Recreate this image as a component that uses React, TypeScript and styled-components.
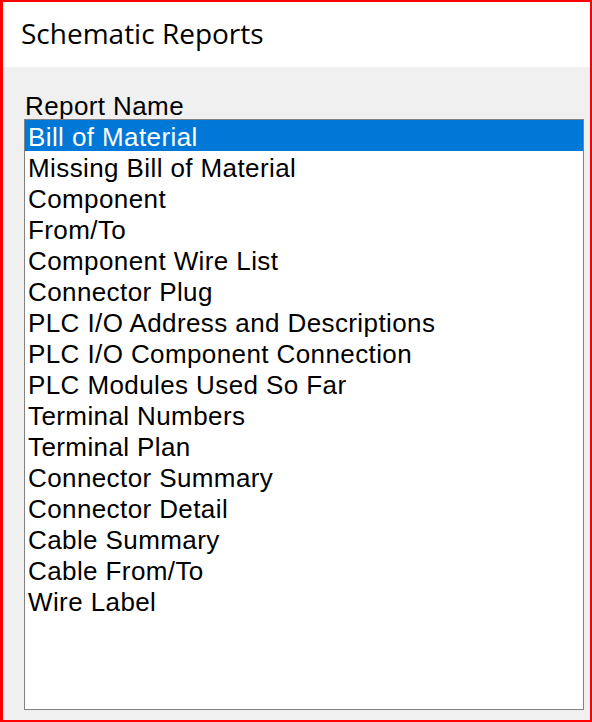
import React, { useState } from "react";
import styled, { createGlobalStyle } from "styled-components";

const GlobalStyle = createGlobalStyle`
  html, body {
    margin: 0;
    padding: 0;
    width: 100%;
    height: 100%;
    background: #ffffff;
  }
  #root {
    height: 100%;
  }
`;

const Frame = styled.div`
  box-sizing: border-box;
  width: 592px;
  height: 722px;
  border: 2px solid #ff0000;
  border-left-width: 3px;
  display: flex;
  flex-direction: column;
  background: #f0f0f0;
`;

const Header = styled.div`
  height: 65px;
  background: #ffffff;
  display: flex;
  align-items: center;
  padding-left: 18px;
  padding-bottom: 4px;
  box-sizing: border-box;
  font-family: "Open Sans", "Noto Sans", sans-serif;
  font-size: 28px;
  color: #000000;
`;

const Body = styled.div`
  flex: 1;
  display: flex;
  flex-direction: column;
  padding: 23px 6px 10px 21px;
  font-family: "Liberation Sans", Arial, sans-serif;
  letter-spacing: 0.4px;
`;

const Label = styled.div`
  font-size: 26px;
  height: 29px;
  line-height: 27px;
  padding-top: 3px;
  box-sizing: border-box;
  padding-left: 1px;
  color: #000000;
`;

const ListBox = styled.ul`
  flex: 1;
  list-style: none;
  margin: 0;
  padding: 0;
  background: #ffffff;
  border: 1px solid #828282;
`;

const Item = styled.li<{ $selected: boolean }>`
  box-sizing: border-box;
  height: 31px;
  padding-top: 4px;
  line-height: 27px;
  padding-left: 3px;
  font-size: 26px;
  white-space: nowrap;
  cursor: default;
  color: ${(p) => (p.$selected ? "#ffffff" : "#000000")};
  background: ${(p) => (p.$selected ? "#0078d7" : "transparent")};
`;

const reports = [
  "Bill of Material",
  "Missing Bill of Material",
  "Component",
  "From/To",
  "Component Wire List",
  "Connector Plug",
  "PLC I/O Address and Descriptions",
  "PLC I/O Component Connection",
  "PLC Modules Used So Far",
  "Terminal Numbers",
  "Terminal Plan",
  "Connector Summary",
  "Connector Detail",
  "Cable Summary",
  "Cable From/To",
  "Wire Label",
];

const App = () => {
  const [selected, setSelected] = useState(0);

  return (
    <>
      <GlobalStyle />
      <Frame>
        <Header>Schematic Reports</Header>
        <Body>
          <Label>Report Name</Label>
          <ListBox>
            {reports.map((name, i) => (
              <Item key={name} $selected={i === selected} onClick={() => setSelected(i)}>
                {name}
              </Item>
            ))}
          </ListBox>
        </Body>
      </Frame>
    </>
  );
};

export default App;
